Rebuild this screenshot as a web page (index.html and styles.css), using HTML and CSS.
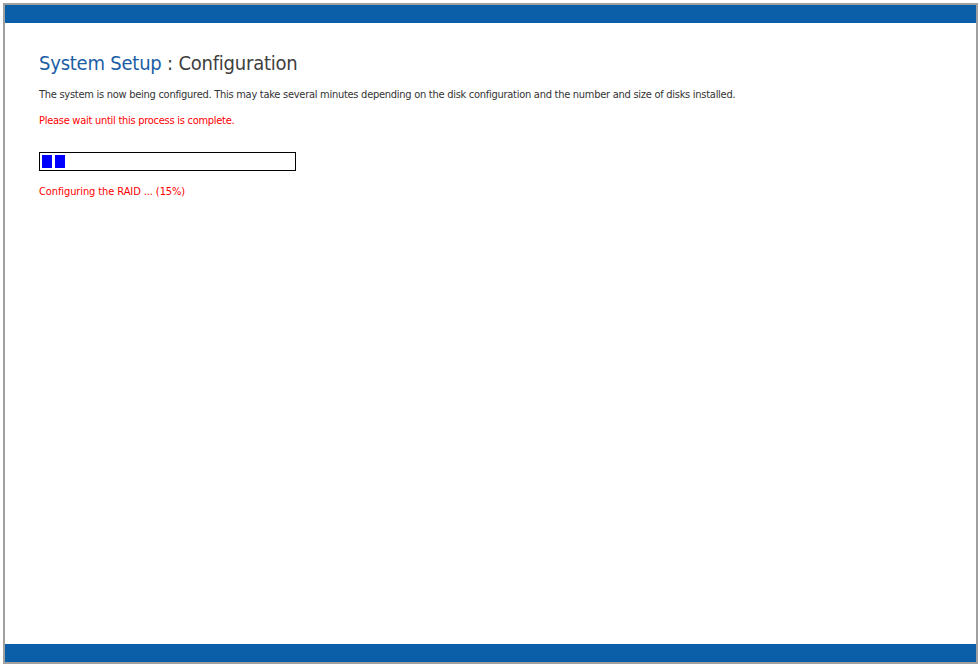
FILE: index.html
```html
<!DOCTYPE html>
<html>
<head>
<meta charset="utf-8">
<link rel="stylesheet" href="styles.css">
</head>
<body>
<div class="frame">
  <div class="bar"></div>
  <div class="content">
    <h1 class="title"><span class="title-main">System Setup</span> : Configuration</h1>
    <p class="info">The system is now being configured. This may take several minutes depending on the disk configuration and the number and size of disks installed.</p>
    <p class="warn">Please wait until this process is complete.</p>
    <div class="progress">
      <span class="block"></span>
      <span class="block"></span>
    </div>
    <p class="status">Configuring the RAID ... (15%)</p>
  </div>
  <div class="bar"></div>
</div>
</body>
</html>
```
FILE: styles.css
```css
html, body {
  margin: 0;
  padding: 0;
  background: #fff;
}
body {
  padding: 3px;
  font-family: "DejaVu Sans Condensed", "DejaVu Sans", sans-serif;
  font-size: 11px;
  letter-spacing: -0.27px;
  color: #333;
}
.frame {
  box-sizing: border-box;
  width: 975px;
  height: 661px;
  border: 2px solid #a0a0a0;
  display: flex;
  flex-direction: column;
}
.bar {
  height: 18px;
  background: #0b5fa8;
  flex: none;
}
.content {
  flex: 1;
  padding: 28px 34px 0;
}
.title {
  margin: 0;
  font-size: 20px;
  font-weight: normal;
  line-height: 24px;
  letter-spacing: -0.22px;
  color: #404040;
}
.title-main {
  color: #1b5ea6;
}
.info {
  margin: 13px 0 0;
  line-height: 14px;
}
.warn {
  margin: 12px 0 0;
  line-height: 14px;
  color: #ff0000;
}
.progress {
  box-sizing: border-box;
  width: 257px;
  height: 19px;
  border: 1px solid #000;
  margin-top: 24px;
  padding: 2px;
  display: flex;
  gap: 3px;
}
.block {
  width: 10px;
  height: 13px;
  background: #0000ff;
}
.status {
  margin: 14px 0 0;
  line-height: 14px;
  letter-spacing: -0.1px;
  color: #ff0000;
}
```
